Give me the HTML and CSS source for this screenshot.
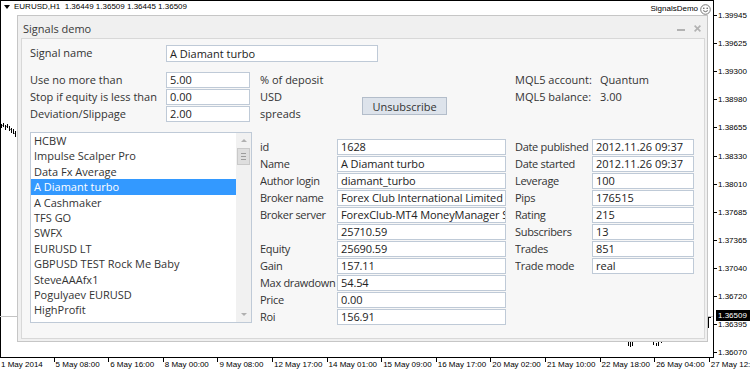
FILE: index.html
```html
<!DOCTYPE html>
<html lang="en">
<head>
    <meta charset="UTF-8">
    <meta name="viewport" content="width=device-width, initial-scale=1.0">
    <title>Signals demo</title>
    <link rel="stylesheet" href="styles.css">
</head>
<body>
    <div class="terminal">
        <div class="chart">
            <svg class="bars" width="714" height="358" viewBox="0 0 714 358">
                <path class="bid-line" d="M0 316.5 H713"/>
                <path class="ohlc" d="M1.5 124 V128 M3.5 123 V127 M2.5 125.5 H3.5 M5.5 125 V130 M7.5 124 V128 M6.5 126.5 H7.5 M9.5 126 V131 M11.5 128 V133 M10.5 129.5 H11.5 M13.5 129 V134 M15.5 131 V137 M14.5 133.5 H15.5
                    M628.5 341 V346 M630.5 340 V347 M632.5 341 V346
                    M653.5 342 V345 M656.5 343 V346 M658.5 341 V346 M661.5 340 V343 M663.5 339 V342 M662.5 341.5 H661.5
                    M708.5 317 V328 M708.5 317.5 H711"/>
            </svg>
            <div class="chart-caption"><span class="caption-arrow"></span>EURUSD,H1&nbsp; 1.36449 1.36509 1.36445 1.36509</div>
            <div class="expert-name">
                SignalsDemo
                <svg width="11" height="11" viewBox="0 0 11 11">
                    <circle cx="5.5" cy="5.5" r="4.8" fill="#fff" stroke="#777" stroke-width="1"/>
                    <circle cx="3.8" cy="4.2" r="0.8" fill="#555"/>
                    <circle cx="7.2" cy="4.2" r="0.8" fill="#555"/>
                    <path d="M3.2 6.6 Q5.5 8.8 7.8 6.6" fill="none" stroke="#555" stroke-width="0.9"/>
                </svg>
            </div>

            <div class="dialog">
                <div class="dialog-title">
                    <span>Signals demo</span>
                    <div class="title-buttons">
                        <span class="btn-min"></span>
                        <svg width="7" height="7" viewBox="0 0 7 7">
                            <path d="M0.6 0.6 L6.4 6.4 M6.4 0.6 L0.6 6.4" stroke="#b2b2b2" stroke-width="1.6"/>
                        </svg>
                    </div>
                </div>
                <div class="dialog-client">
                    <div class="name-row">
                        <span class="label">Signal name</span>
                        <div class="edit edit-name">A Diamant turbo</div>
                    </div>

                    <div class="limits">
                        <span class="label">Use no more than</span>
                        <div class="edit">5.00</div>
                        <span class="label unit">% of deposit</span>
                        <span class="label acct-label">MQL5 account:</span>
                        <span class="label acct-value">Quantum</span>

                        <span class="label">Stop if equity is less than</span>
                        <div class="edit">0.00</div>
                        <span class="label unit">USD</span>
                        <button class="unsubscribe" type="button">Unsubscribe</button>
                        <span class="label acct-label">MQL5 balance:</span>
                        <span class="label acct-value">3.00</span>

                        <span class="label">Deviation/Slippage</span>
                        <div class="edit">2.00</div>
                        <span class="label unit">spreads</span>
                    </div>

                    <div class="signal-info">
                        <div class="signal-list">
                            <div class="list-items">
                                <div class="list-item">HCBW</div>
                                <div class="list-item">Impulse Scalper Pro</div>
                                <div class="list-item">Data Fx Average</div>
                                <div class="list-item selected">A Diamant turbo</div>
                                <div class="list-item">A Cashmaker</div>
                                <div class="list-item">TFS GO</div>
                                <div class="list-item">SWFX</div>
                                <div class="list-item">EURUSD LT</div>
                                <div class="list-item">GBPUSD TEST Rock Me Baby</div>
                                <div class="list-item">SteveAAAfx1</div>
                                <div class="list-item">Pogulyaev EURUSD</div>
                                <div class="list-item">HighProfit</div>
                            </div>
                            <div class="scrollbar">
                                <span class="scroll-btn"><span class="arrow-up"></span></span>
                                <span class="scroll-thumb"><span></span><span></span><span></span></span>
                                <span class="scroll-track"></span>
                                <span class="scroll-btn"><span class="arrow-down"></span></span>
                            </div>
                        </div>

                        <div class="info-column info-main">
                            <div class="info-row"><span class="label">id</span><div class="edit">1628</div></div>
                            <div class="info-row"><span class="label">Name</span><div class="edit">A Diamant turbo</div></div>
                            <div class="info-row"><span class="label">Author login</span><div class="edit">diamant_turbo</div></div>
                            <div class="info-row"><span class="label">Broker name</span><div class="edit">Forex Club International Limited</div></div>
                            <div class="info-row"><span class="label">Broker server</span><div class="edit">ForexClub-MT4 MoneyManager Server</div></div>
                            <div class="info-row"><span class="label"></span><div class="edit">25710.59</div></div>
                            <div class="info-row"><span class="label">Equity</span><div class="edit">25690.59</div></div>
                            <div class="info-row"><span class="label">Gain</span><div class="edit">157.11</div></div>
                            <div class="info-row"><span class="label">Max drawdown</span><div class="edit">54.54</div></div>
                            <div class="info-row"><span class="label">Price</span><div class="edit">0.00</div></div>
                            <div class="info-row"><span class="label">Roi</span><div class="edit">156.91</div></div>
                        </div>

                        <div class="info-column info-stats">
                            <div class="info-row"><span class="label">Date published</span><div class="edit">2012.11.26 09:37</div></div>
                            <div class="info-row"><span class="label">Date started</span><div class="edit">2012.11.26 09:37</div></div>
                            <div class="info-row"><span class="label">Leverage</span><div class="edit">100</div></div>
                            <div class="info-row"><span class="label">Pips</span><div class="edit">176515</div></div>
                            <div class="info-row"><span class="label">Rating</span><div class="edit">215</div></div>
                            <div class="info-row"><span class="label">Subscribers</span><div class="edit">13</div></div>
                            <div class="info-row"><span class="label">Trades</span><div class="edit">851</div></div>
                            <div class="info-row"><span class="label">Trade mode</span><div class="edit">real</div></div>
                        </div>
                    </div>
                </div>
            </div>
        </div>

        <div class="price-axis">
            <span class="price">1.39945</span>
            <span class="price">1.39625</span>
            <span class="price">1.39300</span>
            <span class="price">1.38980</span>
            <span class="price">1.38655</span>
            <span class="price">1.38330</span>
            <span class="price">1.38010</span>
            <span class="price">1.37685</span>
            <span class="price">1.37365</span>
            <span class="price">1.37040</span>
            <span class="price">1.36720</span>
            <span class="price">1.36395</span>
            <span class="price">1.36070</span>
        </div>
        <div class="price-badge">1.36509</div>

        <div class="time-axis">
            <span class="time">1 May 2014</span>
            <span class="time">5 May 08:00</span>
            <span class="time">6 May 16:00</span>
            <span class="time">8 May 00:00</span>
            <span class="time">9 May 08:00</span>
            <span class="time">12 May 17:00</span>
            <span class="time">14 May 01:00</span>
            <span class="time">15 May 09:00</span>
            <span class="time">16 May 17:00</span>
            <span class="time">20 May 02:00</span>
            <span class="time">21 May 10:00</span>
            <span class="time">22 May 18:00</span>
            <span class="time">26 May 04:00</span>
            <span class="time">27 May 12:00</span>
        </div>
    </div>
</body>
</html>
```

FILE: styles.css
```css
* {
    box-sizing: border-box;
}

body {
    margin: 0;
    background: #fff;
    font-family: "Liberation Sans", Arial, sans-serif;
    color: #000;
}

.terminal {
    position: relative;
    width: 750px;
    height: 373px;
    overflow: hidden;
    display: grid;
    grid-template-columns: 714px 36px;
    grid-template-rows: 358px 15px;
}

/* chart canvas */

.chart {
    position: relative;
    border: 1px solid #000;
    background: #fff;
}

.bars {
    position: absolute;
    top: -1px;
    left: -1px;
}

.bid-line {
    stroke: #c4c4c4;
    stroke-width: 1;
}

.ohlc {
    fill: none;
    stroke: #000;
    stroke-width: 1;
}

.chart-caption {
    position: absolute;
    top: 0;
    left: 3px;
    display: flex;
    align-items: center;
    font-size: 8px;
    line-height: 12px;
    white-space: nowrap;
}

.caption-arrow {
    width: 0;
    height: 0;
    margin-right: 4px;
    border-left: 3px solid transparent;
    border-right: 3px solid transparent;
    border-top: 4px solid #000;
}

.expert-name {
    position: absolute;
    top: 2px;
    right: 2px;
    display: flex;
    align-items: center;
    gap: 2px;
    font-size: 8px;
    line-height: 12px;
}

/* price and time axes */

.price-axis {
    display: flex;
    flex-direction: column;
    padding-top: 1.5px;
    height: 358px;
}

.price {
    flex: 0 0 28.1px;
    display: flex;
    align-items: center;
    font-size: 8px;
    white-space: nowrap;
}

.price::before {
    content: "";
    width: 3px;
    height: 1px;
    margin-right: 1px;
    background: #000;
}

.price-badge {
    position: absolute;
    left: 716px;
    top: 310px;
    width: 34px;
    height: 11px;
    padding-left: 2px;
    background: #000;
    color: #fff;
    font-size: 8px;
    line-height: 11px;
}

.time-axis {
    grid-column: 1 / span 2;
    display: flex;
    margin-left: -1px;
}

.time {
    flex: 0 0 54.6px;
    padding-left: 2px;
    font-size: 8px;
    line-height: 14px;
    white-space: nowrap;
    background: linear-gradient(#000, #000) no-repeat 0 0 / 1px 4px;
}

/* dialog */

.dialog {
    position: absolute;
    left: 16px;
    top: 14px;
    width: 691px;
    height: 327px;
    display: flex;
    flex-direction: column;
    padding: 0 2px 2px 3px;
    background: #f0f0f0;
    border: 1px solid #c6c6c6;
    font-family: "Open Sans", "Noto Sans", sans-serif;
    font-size: 11px;
    color: #333;
}

.dialog-title {
    height: 22px;
    flex: 0 0 22px;
    display: flex;
    align-items: center;
    justify-content: space-between;
    padding: 3px 4px 0 2px;
    color: #3a3a3a;
}

.title-buttons {
    display: flex;
    align-items: center;
    gap: 9px;
}

.btn-min {
    width: 8px;
    height: 2px;
    margin-top: 3px;
    background: #b2b2b2;
}

.dialog-client {
    flex: 1;
    padding: 6px 0 0 8px;
    background: #f7f7f7;
    border: 1px solid #d8d8d8;
}

.label {
    line-height: 16px;
    white-space: nowrap;
}

.edit {
    height: 16px;
    padding: 0 3px;
    background: #fff;
    border: 1px solid #bfcad7;
    color: #222;
    line-height: 14px;
    white-space: nowrap;
    overflow: hidden;
    text-overflow: clip;
}

.name-row {
    display: flex;
    height: 17px;
}

.name-row .label {
    width: 136px;
}

.edit-name {
    width: 212px;
    height: 17px;
    line-height: 15px;
}

.limits {
    display: grid;
    grid-template-columns: 136px 84px 112px 85px 68px 85px 1fr;
    grid-template-rows: repeat(3, 17px);
    margin-top: 10px;
}

.unit {
    padding-left: 10px;
}

.acct-label {
    grid-column: 6;
}

.acct-value {
    grid-column: 7;
}

.unsubscribe {
    grid-column: 4;
    grid-row: span 2;
    align-self: center;
    height: 18px;
    padding: 0;
    background: #dde3eb;
    border: 1px solid #b3bdca;
    font-family: inherit;
    font-size: 11px;
    color: #333;
}

.signal-info {
    display: flex;
    margin-top: 9px;
}

.signal-list {
    display: flex;
    width: 222px;
    height: 191px;
    background: #fff;
    border: 1px solid #bfcad7;
}

.list-items {
    flex: 1;
}

.list-item {
    height: 15.4px;
    padding-left: 3px;
    line-height: 15.4px;
    white-space: nowrap;
}

.list-item.selected {
    background: #3399ff;
    color: #fff;
}

.scrollbar {
    width: 15px;
    display: flex;
    flex-direction: column;
    background: #f1f1f1;
}

.scroll-btn {
    height: 15px;
    display: flex;
    align-items: center;
    justify-content: center;
}

.arrow-up,
.arrow-down {
    width: 0;
    height: 0;
    border-left: 3.5px solid transparent;
    border-right: 3.5px solid transparent;
}

.arrow-up {
    border-bottom: 3px solid #b0b0b0;
}

.arrow-down {
    border-top: 3px solid #b0b0b0;
}

.scroll-thumb {
    height: 17px;
    margin: 0 1px;
    display: flex;
    flex-direction: column;
    justify-content: center;
    gap: 2px;
    background: #dedede;
    border: 1px solid #c9c9c9;
}

.scroll-thumb span {
    height: 1px;
    margin: 0 3px;
    background: #9c9c9c;
}

.scroll-track {
    flex: 1;
}

.info-column {
    display: flex;
    flex-direction: column;
    gap: 1px;
    padding-top: 7px;
}

.info-row {
    display: flex;
    height: 16px;
}

.info-row .label {
    flex: 0 0 77px;
    letter-spacing: -0.3px;
    overflow: hidden;
}

.info-main {
    margin-left: 8px;
}

.info-main .edit {
    width: 169px;
    letter-spacing: -0.1px;
}

.info-stats {
    margin-left: 9px;
}

.info-stats .edit {
    width: 102px;
}
```
